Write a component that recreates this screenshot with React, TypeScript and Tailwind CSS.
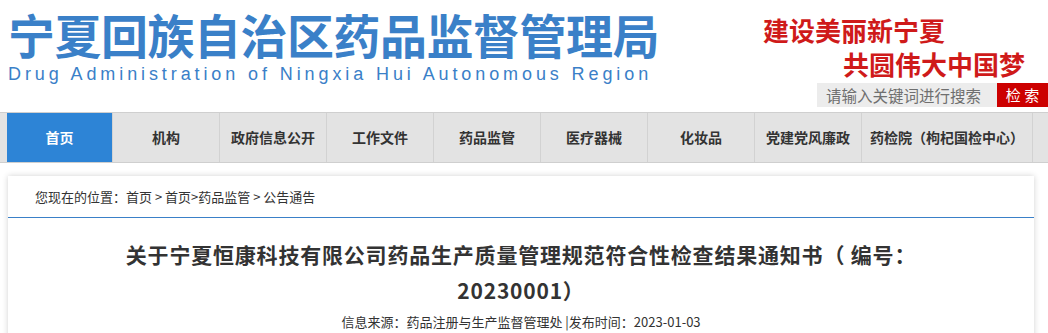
const navItems = [
  "机构",
  "政府信息公开",
  "工作文件",
  "药品监管",
  "医疗器械",
  "化妆品",
  "党建党风廉政",
];

const cjk = "font-['Noto_Sans_CJK_SC',sans-serif]";

function Header() {
  return (
    <header className="flex h-[112px] justify-between">
      <div className="pl-[8px] pt-[10px]">
        <h1 className={`${cjk} h-[47px] text-[47px] font-bold leading-none tracking-[-0.5px] text-[#3a80c8]`}>
          宁夏回族自治区药品监督管理局
        </h1>
        <p className="mt-[8px] font-['Liberation_Sans',Arial,sans-serif] text-[18px] leading-[18px] tracking-[3.9px] text-[#3a80c8]">
          Drug Administration of Ningxia Hui Autonomous Region
        </p>
      </div>
      <div className="flex flex-col items-end pt-[13px]">
        <div className={`${cjk} mr-[103px] text-[26px] font-bold leading-[34px] text-[#cf1a1a]`}>
          建设美丽新宁夏
        </div>
        <div className={`${cjk} mr-[23px] text-[26px] font-bold leading-[34px] text-[#cf1a1a]`}>
          共圆伟大中国梦
        </div>
        <form className="mt-[2px] flex h-[24px]">
          <input
            className={`${cjk} h-full w-[180px] bg-[#ececec] pl-[9px] text-[15.5px] text-[#333] outline-none placeholder:text-[#6f6f6f]`}
            placeholder="请输入关键词进行搜索"
          />
          <button
            type="button"
            className={`${cjk} h-full w-[51px] bg-[#cc0000] text-[15px] text-white`}
          >
            检 索
          </button>
        </form>
      </div>
    </header>
  );
}

function Nav() {
  return (
    <nav className={`${cjk} flex h-[51px] border-y border-[#cfcfcf] bg-[#e3e3e3] pl-[7px] text-[14px] font-bold text-[#333]`}>
      <a className="flex w-[106px] items-center justify-center border-r border-[#d2d2d2] bg-[#2d84d6] text-white">
        首页
      </a>
      {navItems.map((item) => (
        <a
          key={item}
          className="flex w-[107px] items-center justify-center border-r border-[#d2d2d2]"
        >
          {item}
        </a>
      ))}
      <a className="flex w-[171px] items-center justify-center border-r border-[#d2d2d2]">
        药检院（枸杞国检中心）
      </a>
    </nav>
  );
}

function Article() {
  return (
    <div className="pl-[8px] pt-[13px]">
      <div className="h-[200px] w-[1026px] bg-white shadow-[0_0_6px_rgba(0,0,0,0.18)]">
        <div className={`${cjk} flex h-[42px] items-center border-b border-[#3a80c8] px-[27px] text-[13px] text-[#333]`}>
          您现在的位置：首页 &gt; 首页&gt;药品监管 &gt; 公告通告
        </div>
        <h2 className={`${cjk} mx-auto max-w-[810px] pt-[18px] text-center text-[21px] font-bold leading-[36px] tracking-[0.8px] text-[#333]`}>
          关于宁夏恒康科技有限公司药品生产质量管理规范符合性检查结果通知书（ 编号：20230001）
        </h2>
        <p className={`${cjk} mt-[4px] text-center text-[13px] leading-[20px] text-[#333]`}>
          信息来源：药品注册与生产监督管理处 |发布时间：2023-01-03
        </p>
      </div>
    </div>
  );
}

export default function App() {
  return (
    <div className="h-[333px] w-[1048px] overflow-hidden bg-white">
      <Header />
      <Nav />
      <Article />
    </div>
  );
}
